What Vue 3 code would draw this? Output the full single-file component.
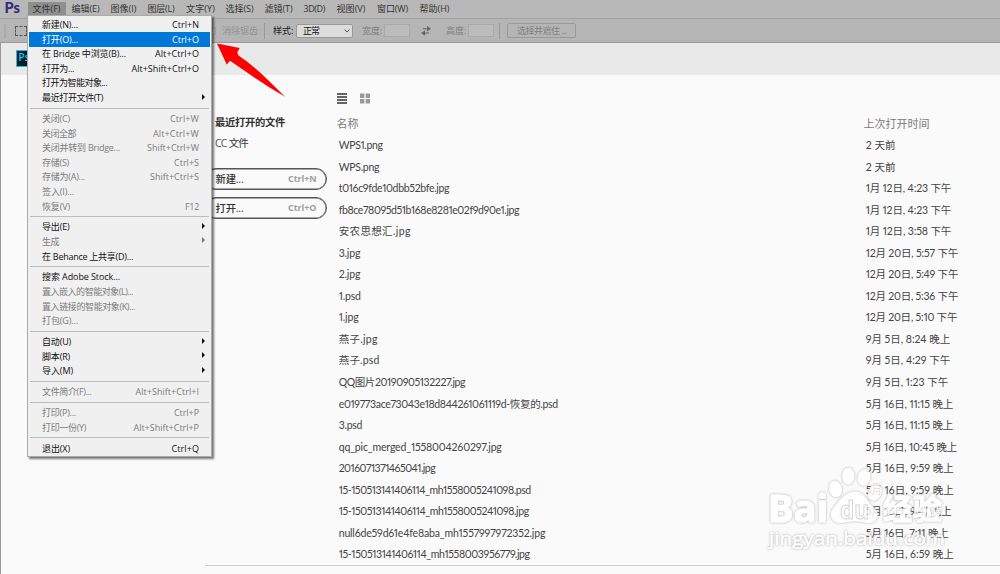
<script setup>
const menuBar = [
  { text: "文件(F)", left: 32.5, width: 28, active: true },
  { text: "编辑(E)", left: 71.5, width: 28 },
  { text: "图像(I)", left: 110.5, width: 26 },
  { text: "图层(L)", left: 147.5, width: 27 },
  { text: "文字(Y)", left: 186, width: 29 },
  { text: "选择(S)", left: 225.5, width: 28 },
  { text: "滤镜(T)", left: 264.5, width: 28 },
  { text: "3D(D)", left: 303.5, width: 21.5 },
  { text: "视图(V)", left: 336.5, width: 29 },
  { text: "窗口(W)", left: 377, width: 31 },
  { text: "帮助(H)", left: 419.5, width: 30 },
].map((item, i, all) => ({
  ...item,
  gap: i ? item.left - all[i - 1].left - all[i - 1].width : 0,
}));

// label, label width, shortcut, shortcut width, disabled, submenu
const item = (label, w, key = "", kw = 0, off = false, sub = false) => ({
  label,
  w,
  key,
  kw,
  off,
  sub,
});

const groups = [
  [
    item("新建(N)...", 36, "Ctrl+N", 27),
    item("打开(O)...", 36, "Ctrl+O", 27),
    item("在 Bridge 中浏览(B)...", 84, "Alt+Ctrl+O", 44),
    item("打开为...", 32, "Alt+Shift+Ctrl+O", 67.5),
    item("打开为智能对象...", 65),
    item("最近打开文件(T)", 61, "", 0, false, true),
  ],
  [
    item("关闭(C)", 28, "Ctrl+W", 29, true),
    item("关闭全部", 34, "Alt+Ctrl+W", 46, true),
    item("关闭并转到 Bridge...", 78, "Shift+Ctrl+W", 52, true),
    item("存储(S)", 27, "Ctrl+S", 25, true),
    item("存储为(A)...", 43, "Shift+Ctrl+S", 49, true),
    item("签入(I)...", 32, "", 0, true),
    item("恢复(V)", 28, "F12", 14, true),
  ],
  [
    item("导出(E)", 27.5, "", 0, false, true),
    item("生成", 17, "", 0, true, true),
    item("在 Behance 上共享(D)...", 91),
  ],
  [
    item("搜索 Adobe Stock...", 78),
    item("置入嵌入的智能对象(L)...", 91, "", 0, true),
    item("置入链接的智能对象(K)...", 93, "", 0, true),
    item("打包(G)...", 36, "", 0, true),
  ],
  [
    item("自动(U)", 29, "", 0, false, true),
    item("脚本(R)", 28, "", 0, false, true),
    item("导入(M)", 31, "", 0, false, true),
  ],
  [item("文件简介(F)...", 49.5, "Alt+Shift+Ctrl+I", 63.5, true)],
  [
    item("打印(P)...", 34, "Ctrl+P", 25, true),
    item("打印一份(Y)", 44, "Alt+Shift+Ctrl+P", 65.5, true),
  ],
  [item("退出(X)", 28, "Ctrl+Q", 27.5)],
];

const files = [
  ["WPS1.png", 44, "2 天前", 30],
  ["WPS.png", 40.5, "2 天前", 30],
  ["t016c9fde10dbb52bfe.jpg", 110.5, "1月 12日, 4:23 下午", 85.5],
  ["fb8ce78095d51b168e8281e02f9d90e1.jpg", 180.5, "1月 12日, 4:23 下午", 85.5],
  ["安农思想汇.jpg", 72, "1月 12日, 3:58 下午", 85.5],
  ["3.jpg", 21.5, "12月 20日, 5:57 下午", 92.5],
  ["2.jpg", 21.5, "12月 20日, 5:49 下午", 92.5],
  ["1.psd", 22, "12月 20日, 5:36 下午", 92.5],
  ["1.jpg", 20, "12月 20日, 5:10 下午", 91.5],
  ["燕子.jpg", 39, "9月 5日, 8:24 晚上", 84.5],
  ["燕子.psd", 41, "9月 5日, 4:29 下午", 84.5],
  ["QQ图片20190905132227.jpg", 126.5, "9月 5日, 1:23 下午", 82.5],
  ["e019773ace73043e18d844261061119d-恢复的.psd", 219, "5月 16日, 11:15 晚上", 87.5],
  ["3.psd", 23.5, "5月 16日, 11:15 晚上", 87.5],
  ["qq_pic_merged_1558004260297.jpg", 163, "5月 16日, 10:45 晚上", 91.5],
  ["2016071371465041.jpg", 96.5, "5月 16日, 9:59 晚上", 88],
  ["15-150513141406114_mh1558005241098.psd", 192, "5月 16日, 9:59 晚上", 88],
  ["15-150513141406114_mh1558005241098.jpg", 190, "5月 16日, 9:41 晚上", 86],
  ["null6de59d61e4fe8aba_mh1557997972352.jpg", 206.5, "5月 16日, 7:11 晚上", 83],
  ["15-150513141406114_mh1558003956779.jpg", 191, "5月 16日, 6:59 晚上", 88],
];

// spreads the letters so the text takes the given width
const vFit = {
  mounted(el, { value }) {
    if (!value) return;
    const natural = el.getBoundingClientRect().width;
    el.style.letterSpacing = (value - natural) / el.textContent.length + "px";
  },
};
</script>

<template>
  <div class="app">
    <div class="menu-bar">
      <span class="logo">Ps</span>
      <span
        v-for="m in menuBar"
        :key="m.text"
        :class="['top-item', m.active ? 'active' : '']"
        :style="{ marginLeft: m.gap + 'px', width: m.width + 'px' }"
      >
        <span v-fit="m.width">{{ m.text }}</span>
      </span>
    </div>

    <div class="options">
      <span class="grip"></span>
      <span class="marquee"></span>
      <span class="check"></span>
      <span class="faint" v-fit="32">消除锯齿</span>
      <span class="divider first"></span>
      <span class="style-label" v-fit="20">样式:</span>
      <span class="select">
        <span v-fit="16">正常</span>
        <svg width="6" height="4" viewBox="0 0 6 4">
          <path d="M0.5 0.5 L3 3 L5.5 0.5" fill="none" stroke="#555" />
        </svg>
      </span>
      <span class="dim width-label" v-fit="20">宽度:</span>
      <span class="field"></span>
      <svg class="swap" width="10" height="10" viewBox="0 0 10 10">
        <path
          d="M2 2.2H6V0L10 2.7L6 5.4V3.3H2Z M8 6.4H4V4.4L0 7L4 9.8V7.6H8Z"
          fill="#666"
        />
      </svg>
      <span class="dim height-label" v-fit="20">高度:</span>
      <span class="field"></span>
      <span class="divider second"></span>
      <span class="button"><span v-fit="50">选择并遮住 ...</span></span>
    </div>

    <div class="start">
      <div class="start-header"><span class="ps-icon">Ps</span></div>
      <div class="content">
        <div class="side">
          <span class="side-title"><span v-fit="70">最近打开的文件</span></span>
          <span class="side-link"><span v-fit="33">CC 文件</span></span>
          <div class="pill new">
            <span v-fit="28">新建...</span><b v-fit="28.5">Ctrl+N</b>
          </div>
          <div class="pill">
            <span v-fit="28">打开...</span><b v-fit="28.5">Ctrl+O</b>
          </div>
        </div>
        <div class="recent">
          <div class="views">
            <svg width="10" height="11" viewBox="0 0 10 11">
              <path
                d="M0 1H10M0 4H10M0 7H10M0 10H10"
                stroke="#333"
                stroke-width="1.7"
              />
            </svg>
            <svg width="10" height="11" viewBox="0 0 10 11">
              <path
                d="M0 0.5H4.4V4.9H0ZM5.7 0.5H10V4.9H5.7ZM0 6.1H4.4V10.5H0ZM5.7 6.1H10V10.5H5.7Z"
                fill="#999"
              />
            </svg>
          </div>
          <div class="row head">
            <span class="name"><span v-fit="22">名称</span></span>
            <span v-fit="66">上次打开时间</span>
          </div>
          <div v-for="(f, i) in files" :key="i" class="row">
            <span class="name"><span v-fit="f[1]">{{ f[0] }}</span></span>
            <span v-fit="f[3]">{{ f[2] }}</span>
          </div>
        </div>
      </div>
      <div class="bottom-line"></div>
    </div>

    <div class="menu">
      <div v-for="(g, i) in groups" :key="i" class="group">
        <div
          v-for="(m, j) in g"
          :key="j"
          :class="['item', m.off ? 'off' : '', i === 0 && j === 1 ? 'hover' : '']"
        >
          <span v-fit="m.w">{{ m.label }}</span>
          <span v-if="m.key" class="key" v-fit="m.kw">{{ m.key }}</span>
          <i v-if="m.sub"></i>
        </div>
      </div>
    </div>

    <svg class="arrow" width="70" height="56" viewBox="0 0 70 56">
      <path
        d="M1 0.5L23.7 5L21.2 9.5L22.5 12.5Q38 23 52 37L69 53.8Q50 43 34 31.5L14 17.7L10.7 21.5Z"
        fill="#ff0000"
      />
    </svg>

    <svg class="watermark" width="200" height="100" viewBox="0 0 200 100">
      <g class="mark">
        <text x="3" y="56.5" font-size="37" textLength="60" lengthAdjust="spacingAndGlyphs">Bai</text>
        <ellipse cx="70.5" cy="24" rx="5.8" ry="7.8" transform="rotate(-12 70.5 24)" />
        <ellipse cx="83.3" cy="11.2" rx="5.4" ry="8" />
        <ellipse cx="99" cy="12.5" rx="5.6" ry="7.8" transform="rotate(15 99 12.5)" />
        <ellipse cx="110" cy="27.5" rx="5.8" ry="7.8" transform="rotate(25 110 27.5)" />
        <path
          d="M89 27C98 26 101 36 107 42C117 50 110 59 101 57C93 55 87 55 79 57C69 59 63 51 69 43C75 36 80 28 89 27Z"
        />
        <text class="du" x="75" y="54" font-size="25" textLength="29" lengthAdjust="spacingAndGlyphs">du</text>
        <text x="118" y="55" font-size="29" textLength="59">经验</text>
        <text class="site" x="4" y="80" font-size="19" textLength="176" lengthAdjust="spacingAndGlyphs">jingyan.baidu.com</text>
      </g>
    </svg>
  </div>
</template>

<style>
body {
  overflow: hidden;
}
</style>

<style scoped>
.app {
  position: relative;
  box-sizing: border-box;
  width: 1000px;
  height: 574px;
  overflow: hidden;
  display: flex;
  flex-direction: column;
  background-color: #fafafa;
  color: #333;
  font-family: "Open Sans", "Noto Sans CJK SC", sans-serif;
  font-size: 9px;
  white-space: nowrap;
}

.menu-bar {
  box-sizing: border-box;
  height: 19px;
  display: flex;
  line-height: 17px;
  background-color: #b8b8b8;
  border-bottom: 1px solid #a2a2a2;
}

.logo {
  box-sizing: border-box;
  width: 32.5px;
  padding-left: 4.5px;
  line-height: 16px;
  font-family: Lato, sans-serif;
  font-size: 14.5px;
  font-weight: 900;
  color: #352a80;
}

.top-item {
  flex: none;
}

.top-item.active {
  height: 15px;
  margin-top: 2px;
  line-height: 13px;
  background-color: #8f8f8f;
  box-shadow: -5px 0 #8f8f8f, 5px 0 #8f8f8f;
}

.options {
  box-sizing: border-box;
  height: 24px;
  display: flex;
  align-items: center;
  background-color: #b5b5b5;
  border-bottom: 1px solid #999;
}

.grip {
  width: 2px;
  height: 14px;
  margin-left: 4px;
  background-color: #aaa;
}

.marquee {
  width: 10px;
  height: 8px;
  margin-left: 9px;
  border: 1px dashed #555;
}

.check {
  box-sizing: border-box;
  width: 8px;
  height: 8px;
  margin-left: 181px;
  margin-right: 6px;
  border: 1px solid #a5a5a5;
}

.faint {
  width: 32px;
  color: #929292;
}

.divider {
  width: 1px;
  height: 16px;
  background-color: #999;
}

.divider.first {
  margin-left: 10px;
}

.style-label {
  width: 20px;
  margin-left: 8px;
  color: #222;
}

.select {
  box-sizing: border-box;
  width: 57px;
  height: 14px;
  margin-left: 3px;
  padding: 0 2px 0 6px;
  display: flex;
  align-items: center;
  justify-content: space-between;
  line-height: 12px;
  color: #111;
  background-color: #dcdcdc;
  border: 1px solid #999;
  border-radius: 2px;
}

.dim {
  width: 20px;
  color: #808080;
}

.width-label {
  margin-left: 9px;
}

.height-label {
  margin-left: 15px;
}

.field {
  box-sizing: border-box;
  width: 26px;
  height: 13px;
  margin-left: 2px;
  background-color: #bcbcbc;
  border: 1px solid #aaa;
}

.swap {
  margin-left: 11px;
}

.divider.second {
  margin-left: 5px;
}

.button {
  box-sizing: border-box;
  width: 69px;
  height: 15px;
  margin-left: 7px;
  padding-left: 9px;
  line-height: 13px;
  color: #808080;
  border: 1px solid #999;
  border-radius: 2px;
}

.start {
  flex: 1;
  display: flex;
  flex-direction: column;
  border-left: 1px solid #999;
}

.start-header {
  height: 32px;
  padding: 7px 0 0 14.5px;
  box-sizing: border-box;
  background-color: #e9e9e9;
}

.ps-icon {
  box-sizing: border-box;
  display: block;
  width: 18px;
  height: 17px;
  padding-left: 2px;
  line-height: 13px;
  font-size: 10px;
  font-weight: 600;
  color: #20c8f4;
  background-color: #061e28;
  border: 1.5px solid #18bde8;
}

.content {
  height: 490px;
  display: flex;
}

.side {
  width: 121px;
  padding: 36.5px 0 0 204px;
  display: flex;
  flex-direction: column;
}

.side-title,
.side-link {
  padding-left: 10px;
  height: 21px;
  line-height: 20px;
  font-size: 10.3px;
  font-weight: 600;
}

.side-link {
  color: #555;
  font-weight: 500;
}

.pill {
  box-sizing: border-box;
  width: 121.5px;
  height: 22px;
  margin-top: 7px;
  padding: 0 9px 0 9.5px;
  display: flex;
  justify-content: space-between;
  line-height: 20px;
  font-size: 10.3px;
  font-weight: 500;
  border: 1px solid #555;
  border-radius: 11px;
  box-shadow: inset 0 0 0 0.5px #555;
}

.pill.new {
  margin-top: 14.5px;
}

.pill b {
  font-size: 9px;
  font-weight: 700;
  color: #a0a0a0;
}

.recent {
  flex: 1;
  padding: 18px 0 0 10.5px;
  font-family: Lato, "Noto Sans CJK SC", sans-serif;
  font-size: 10.5px;
  font-weight: 400;
  font-variant-numeric: proportional-nums;
  color: #444;
}

.views {
  height: 20px;
  display: flex;
  gap: 13.5px;
}

.row {
  height: 21.55px;
  display: flex;
  line-height: 21.5px;
}

.name {
  width: 527px;
}

.row:not(.head) {
  padding-left: 2.2px;
}

.head {
  height: 22px;
  font-size: 11px;
  color: #7a7a7a;
}

.bottom-line {
  height: 1px;
  margin-left: 204px;
  background-color: #ccc;
}

.menu {
  position: absolute;
  box-sizing: border-box;
  left: 27px;
  top: 15px;
  width: 185px;
  height: 442px;
  padding: 1.8px 1px;
  color: #111;
  background-color: #f0f0f0;
  border: 1px solid #aaa;
  box-shadow: 2px 2px 2px #0008;
}

.group + .group {
  margin-top: 2.4px;
  padding-top: 3.9px;
  position: relative;
}

.group + .group::before {
  content: "";
  position: absolute;
  top: 0;
  left: 1px;
  width: 179px;
  height: 1px;
  background-color: #bcbcbc;
}

.item {
  height: 14.6px;
  padding: 0 11px 0 13px;
  display: flex;
  align-items: center;
  justify-content: space-between;
  line-height: 14px;
}

.item.off {
  color: #7c7c7c;
}

.item.hover {
  color: #fff;
  background-color: #0078d7;
}

.item i {
  margin-right: -6px;
  margin-top: -3px;
  border: 3px solid transparent;
  border-left: 3.5px solid #111;
  border-right: 0;
}

.item.off i {
  border-left-color: #777;
}

.arrow {
  position: absolute;
  left: 216px;
  top: 43px;
}

.watermark {
  position: absolute;
  left: 765px;
  top: 465px;
}

.mark {
  font-family: "Open Sans", "Noto Sans CJK SC", sans-serif;
  font-weight: bold;
  fill: #fff;
  stroke: #fff;
  stroke-width: 1.5;
  opacity: 0.82;
  filter: drop-shadow(0 0 0.9px #999);
}

.du {
  stroke: #ccc;
  stroke-width: 1;
}

.site {
  font-weight: 500;
  stroke-width: 0.5;
}
</style>
